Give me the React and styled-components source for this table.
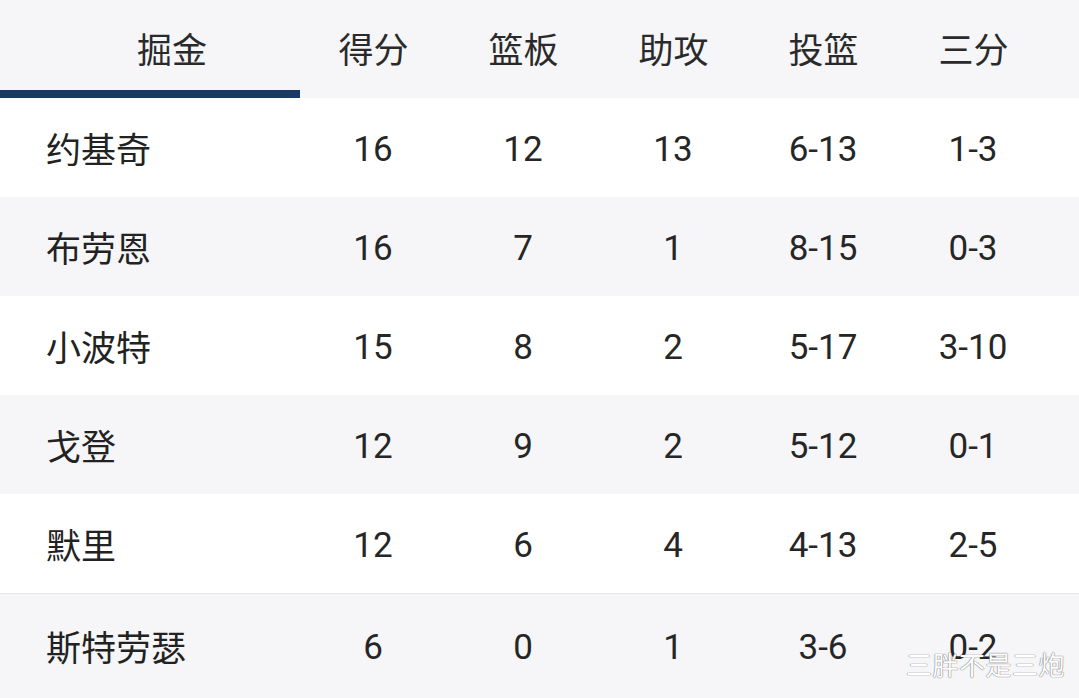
import React from "react";
import styled, { createGlobalStyle } from "styled-components";

const GlobalStyle = createGlobalStyle`
  html, body {
    margin: 0;
    padding: 0;
    background: #ffffff;
  }
  body {
    font-family: Roboto, "Noto Sans CJK SC", sans-serif;
    color: #222;
  }
`;

const Page = styled.div`
  position: relative;
  width: 1079px;
  height: 698px;
  overflow: hidden;
  background: #f6f6f8;
`;

const Row = styled.div`
  display: grid;
  grid-template-columns: 300px repeat(5, 150px) 1fr;
  align-items: center;
  height: ${({ height }) => height || 99}px;
  background: ${({ shaded }) => (shaded ? "#f6f6f8" : "#ffffff")};
  box-shadow: ${({ edged }) => (edged ? "inset 0 2px 1px -1px #e6e7ec" : "none")};
`;

const HeadRow = styled(Row)`
  height: 98px;
  align-items: stretch;
  background: #f6f6f8;
`;

const TeamTab = styled.div`
  display: flex;
  align-items: center;
  justify-content: center;
  padding-left: 44px;
  font-size: 35px;
  color: #2a2a2a;
  border-bottom: 8px solid #193a67;
  box-sizing: border-box;
  padding-top: 4px;
`;

const HeadCell = styled.div`
  display: flex;
  align-items: center;
  justify-content: center;
  font-size: 35px;
  color: #2a2a2a;
  padding-right: 3px;
  padding-bottom: 4px;
`;

const Name = styled.div`
  padding-left: 46px;
  font-size: 35px;
  color: #222;
`;

const Cell = styled.div`
  text-align: center;
  font-size: 35px;
  color: #262626;
  padding-right: 4px;
  padding-top: 4px;
`;

const Watermark = styled.div`
  position: absolute;
  right: 14px;
  bottom: 16px;
  font-family: "Noto Sans CJK SC", sans-serif;
  font-size: 26px;
  letter-spacing: 0.5px;
  color: #ffffff;
  text-shadow: 0 0 1px #6d6d6d, 0 0 1px #6d6d6d;
`;

const headers = ["得分", "篮板", "助攻", "投篮", "三分"];

const players = [
  ["约基奇", "16", "12", "13", "6-13", "1-3"],
  ["布劳恩", "16", "7", "1", "8-15", "0-3"],
  ["小波特", "15", "8", "2", "5-17", "3-10"],
  ["戈登", "12", "9", "2", "5-12", "0-1"],
  ["默里", "12", "6", "4", "4-13", "2-5"],
  ["斯特劳瑟", "6", "0", "1", "3-6", "0-2"],
];

export default function App() {
  return (
    <Page>
      <GlobalStyle />
      <HeadRow>
        <TeamTab>掘金</TeamTab>
        {headers.map((h) => (
          <HeadCell key={h}>{h}</HeadCell>
        ))}
        <div />
      </HeadRow>
      {players.map((p, i) => (
        <Row
          key={p[0]}
          shaded={i % 2 === 1}
          edged={i === players.length - 1}
          height={i === players.length - 1 ? 105 : 99}
        >
          <Name>{p[0]}</Name>
          {p.slice(1).map((v, j) => (
            <Cell key={j}>{v}</Cell>
          ))}
          <div />
        </Row>
      ))}
      <Watermark>三胖不是三炮</Watermark>
    </Page>
  );
}
